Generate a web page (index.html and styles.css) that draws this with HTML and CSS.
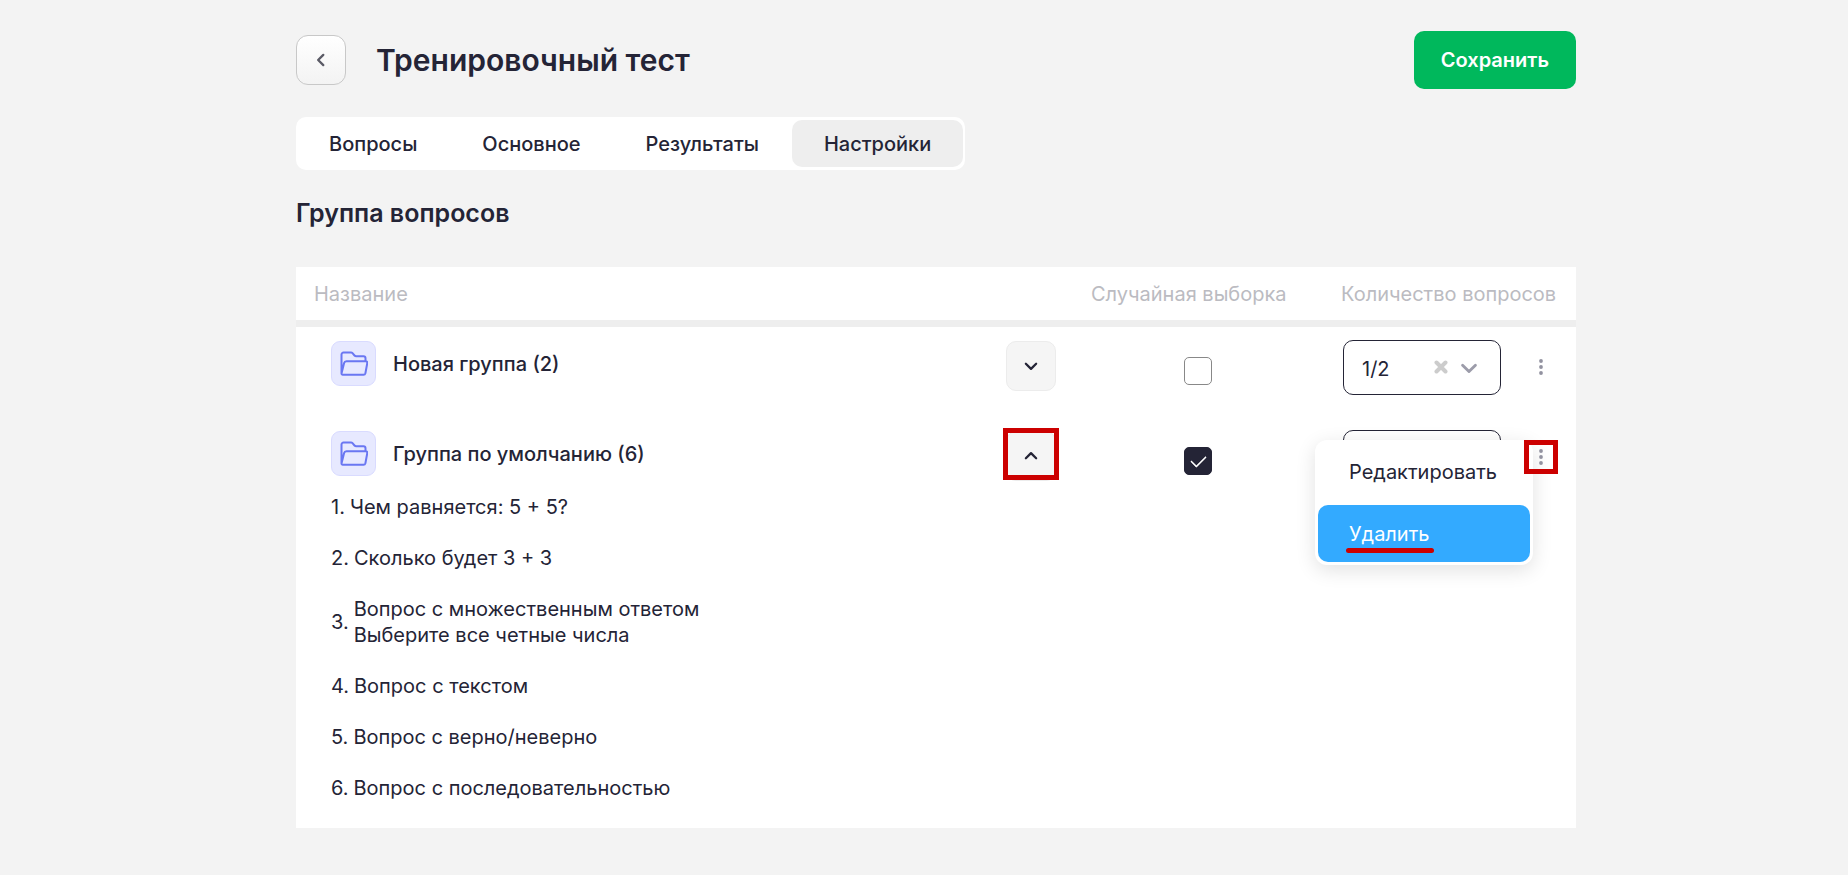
FILE: index.html
```html
<!DOCTYPE html>
<html lang="ru">
<head>
<meta charset="utf-8">
<meta name="viewport" content="width=device-width, initial-scale=1">
<title>Тренировочный тест</title>
<link rel="stylesheet" href="styles.css">
</head>
<body>
<svg class="sprite" aria-hidden="true">
  <symbol id="folder" viewBox="0 0 28 25">
    <path d="M1.500 22.500V3.500a2 2 0 0 1 2-2h7.500a2 2 0 0 1 1.500.7l2 2.300a2.400 2.400 0 0 0 1.800.8h7.200a2 2 0 0 1 2 2v2.900M1.500 22.500a1.200 1.200 0 0 0 1.200 1.300h20.800a2 2 0 0 0 1.900-1.500l1.900-10.300a1.500 1.500 0 0 0-1.500-1.800H6.500a2.500 2.500 0 0 0-2.400 1.900z"/>
  </symbol>
  <symbol id="chevron" viewBox="0 0 14 14">
    <path d="M2.500 5 7 9.500 11.500 5"/>
  </symbol>
  <symbol id="dots" viewBox="0 0 4 16">
    <circle cx="2" cy="2" r="1.900"/><circle cx="2" cy="8" r="1.900"/><circle cx="2" cy="14" r="1.900"/>
  </symbol>
</svg>
<main class="page">
  <header class="header">
    <button class="back" type="button" aria-label="Назад"><svg class="chevron chevron-left"><use href="#chevron"/></svg></button>
    <h1 class="title">Тренировочный тест</h1>
    <button class="save" type="button">Сохранить</button>
  </header>
  <nav class="tabs">
    <a class="tab" href="#questions">Вопросы</a>
    <a class="tab" href="#main">Основное</a>
    <a class="tab" href="#results">Результаты</a>
    <a class="tab tab-active" href="#settings" aria-current="page">Настройки</a>
  </nav>
  <h2 class="subtitle">Группа вопросов</h2>
  <table class="groups">
    <colgroup><col><col class="col-random"><col class="col-count"></colgroup>
    <thead>
      <tr><th scope="col">Название</th><th scope="col">Случайная выборка</th><th scope="col">Количество вопросов</th></tr>
    </thead>
    <tbody>
      <tr class="group">
        <td>
          <div class="name">
            <span class="folder"><svg><use href="#folder"/></svg></span>
            <span class="label">Новая группа (2)</span>
            <button class="toggle" type="button" aria-label="Развернуть" aria-expanded="false"><svg class="chevron"><use href="#chevron"/></svg></button>
          </div>
        </td>
        <td class="random"><input class="check" type="checkbox" aria-label="Случайная выборка: Новая группа"></td>
        <td>
          <div class="count">
            <div class="picker">
              <select class="select" aria-label="Количество вопросов: Новая группа"><option>1/2</option><option>2/2</option></select>
              <button class="clear" type="button" aria-label="Очистить"><svg viewBox="0 0 14 14"><path d="m2.500 2.500 9 9m0-9-9 9"/></svg></button>
              <svg class="arrow"><use href="#chevron"/></svg>
            </div>
            <button class="more" type="button" aria-label="Действия"><svg><use href="#dots"/></svg></button>
          </div>
        </td>
      </tr>
      <tr class="group">
        <td>
          <div class="name">
            <span class="folder"><svg><use href="#folder"/></svg></span>
            <span class="label">Группа по умолчанию (6)</span>
            <button class="toggle toggle-marked" type="button" aria-label="Свернуть" aria-expanded="true"><svg class="chevron chevron-up"><use href="#chevron"/></svg></button>
          </div>
        </td>
        <td class="random"><input class="check" type="checkbox" checked aria-label="Случайная выборка: Группа по умолчанию"></td>
        <td>
          <div class="count">
            <div class="picker">
              <select class="select" aria-label="Количество вопросов: Группа по умолчанию"><option></option></select>
            </div>
            <button class="more more-marked" type="button" aria-label="Действия" aria-expanded="true"><svg><use href="#dots"/></svg></button>
            <div class="menu">
              <button class="item" type="button">Редактировать</button>
              <button class="item item-active" type="button"><span class="underlined">Удалить</span></button>
            </div>
          </div>
        </td>
      </tr>
      <tr>
        <td class="details" colspan="3">
          <div class="questions">
            <div class="question"><span>1.</span><span>Чем равняется: 5 + 5?</span></div>
            <div class="question"><span>2.</span><span>Сколько будет 3 + 3</span></div>
            <div class="question"><span>3.</span><span>Вопрос с множественным ответом<br>Выберите все четные числа</span></div>
            <div class="question"><span>4.</span><span>Вопрос с текстом</span></div>
            <div class="question"><span>5.</span><span>Вопрос с верно/неверно</span></div>
            <div class="question"><span>6.</span><span>Вопрос с последовательностью</span></div>
          </div>
        </td>
      </tr>
    </tbody>
  </table>
</main>
</body>
</html>
```
FILE: styles.css
```css
* { box-sizing: border-box; }

body {
  margin: 0;
  padding: 31px 0 40px 24px;
  background: #f3f3f3;
  color: #242436;
  font: 400 20px/26px Inter, "Liberation Sans", sans-serif;
}

button, select { font: inherit; color: inherit; cursor: pointer; }
button { padding: 0; border: 0; background: none; }
.sprite { position: absolute; width: 0; height: 0; }
svg { display: block; fill: none; stroke: currentColor; stroke-width: 2; stroke-linecap: round; stroke-linejoin: round; }

.page { max-width: 1280px; margin: 0 auto; }

.header { display: flex; align-items: center; gap: 30px; }
.back {
  display: grid;
  place-items: center;
  width: 50px;
  height: 50px;
  border: 1px solid #c8c8c8;
  border-radius: 12px;
  background: linear-gradient(#fff, #f3f3f3);
  color: #5b5b66;
}
.chevron { width: 16px; height: 16px; }
.chevron-left { transform: rotate(90deg); }
.chevron-up { transform: rotate(180deg); }
.title { flex: 1; margin: 0; font-size: 30px; line-height: 40px; font-weight: 600; }
.save {
  height: 58px;
  padding: 0 27px;
  border-radius: 10px;
  background: #00b85c;
  color: #fff;
  font-weight: 600;
}

.tabs {
  display: flex;
  gap: 1px;
  width: fit-content;
  margin-top: 28px;
  padding: 3px 2px 3px 1px;
  border-radius: 10px;
  background: #fff;
}
.tab {
  padding: 11px 32px 10px;
  border-radius: 10px;
  color: inherit;
  font-weight: 500;
  line-height: 26px;
  text-decoration: none;
}
.tab-active { background: #eee; }

.subtitle { margin: 27px 0 38px; font-size: 25px; line-height: 32px; font-weight: 600; }

.groups { width: 100%; border-spacing: 0; background: #fff; }
.col-random { width: 250px; }
.col-count { width: 253px; }
th {
  height: 60px;
  padding: 0 18px;
  border-bottom: 7px solid #eee;
  color: #bbbbc1;
  font-weight: 400;
  text-align: left;
  white-space: nowrap;
}
td { padding: 0; vertical-align: top; }
.group { height: 90px; }
.group + .group { height: 77px; }

.name { display: flex; align-items: flex-start; gap: 17px; padding: 14px 17px 0 35px; }
.folder {
  display: grid;
  place-items: center;
  width: 45px;
  height: 45px;
  border: 1px solid #d9dbff;
  border-radius: 9px;
  background: #e7e9ff;
  color: #6a77f2;
}
.folder svg { width: 28px; height: 25px; }
.label { flex: 1; font-weight: 500; line-height: 46px; }
.toggle {
  display: grid;
  place-items: center;
  position: relative;
  width: 50px;
  height: 50px;
  border: 1px solid #ececec;
  border-radius: 10px;
  background: #f5f5f5;
}
.toggle-marked::after, .more-marked::after { content: ""; position: absolute; border: 5px solid #c00; }
.toggle-marked::after { inset: -4px -4px 0; }

.random { padding-top: 30px; text-align: center; }
.check {
  appearance: none;
  display: grid;
  place-items: center;
  width: 28px;
  height: 28px;
  margin: 0 auto;
  border: 1px solid #888;
  border-radius: 5px;
  background: #fff;
}
.check:checked { border-color: #242436; background: #242436; }
.check:checked::after {
  content: "";
  width: 13px;
  height: 7px;
  border: solid #fff;
  border-width: 0 0 2px 2px;
  border-radius: 1px;
  transform: translateY(-2px) rotate(-45deg);
}

.count { display: flex; position: relative; justify-content: space-between; padding: 13px 18px 0 20px; }
.picker { position: relative; width: 158px; }
.select {
  appearance: none;
  width: 100%;
  height: 55px;
  padding: 3px 18px 0;
  border: 1px solid #242436;
  border-radius: 10px;
  background: #fff;
}
.clear { position: absolute; top: 20px; right: 53px; color: #ccc; }
.clear svg { width: 14px; height: 14px; stroke-width: 4; }
.arrow { position: absolute; top: 18px; right: 22px; width: 20px; height: 20px; color: #9c9caa; }
.more { display: grid; place-items: center; position: relative; width: 34px; height: 34px; margin-top: 10px; color: #9292a0; }
.more svg { width: 4px; height: 16px; fill: currentColor; stroke: none; }
.more-marked { z-index: 2; }
.more-marked::after { inset: 0; }

.menu {
  position: absolute;
  z-index: 1;
  top: 23px;
  right: 43px;
  width: 218px;
  padding: 3px;
  border-radius: 12px;
  background: #fff;
  box-shadow: 0 5px 20px rgba(0, 0, 0, 0.12);
}
.item { display: block; width: 100%; height: 57px; padding: 0 31px; border-radius: 10px; text-align: left; }
.item + .item { margin-top: 5px; }
.item-active { background: #33aaff; color: #fff; }
.underlined { position: relative; }
.underlined::after {
  content: "";
  position: absolute;
  inset: auto -4px -7px -3px;
  height: 5px;
  border-radius: 3px;
  background: #c00;
}

.details { padding: 0 35px 27px; }
.questions { display: flex; flex-direction: column; gap: 25px; }
.question { display: flex; align-items: center; gap: 5px; }
```
